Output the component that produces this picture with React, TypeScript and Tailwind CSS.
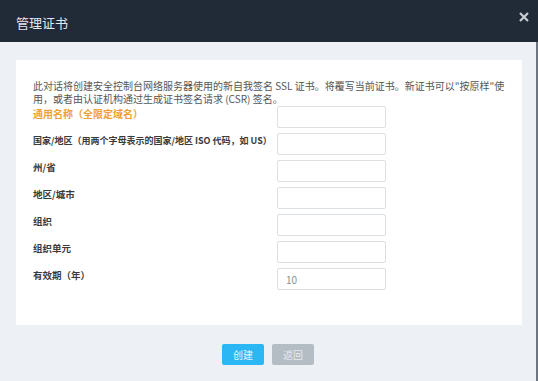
import React from 'react';

const fields = [
  { label: '通用名称（全限定域名）', size: 'text-[10px] text-[#f0a033]', value: '' },
  { label: '国家/地区（用两个字母表示的国家/地区 ISO 代码，如 US）', size: 'text-[9px] text-[#3a3a3a]', value: '' },
  { label: '州/省', size: 'text-[9.5px] text-[#3a3a3a]', value: '' },
  { label: '地区/城市', size: 'text-[9.5px] text-[#3a3a3a]', value: '' },
  { label: '组织', size: 'text-[9.5px] text-[#3a3a3a]', value: '' },
  { label: '组织单元', size: 'text-[9.5px] text-[#3a3a3a]', value: '' },
  { label: '有效期（年）', size: 'text-[9.5px] text-[#3a3a3a]', value: '10' },
];

const App: React.FC = () => {
  return (
    <div
      className="w-[538px] h-[381px] flex flex-col bg-[#edf0f4] overflow-hidden"
      style={{ fontFamily: '"Noto Sans CJK SC", "Noto Sans", sans-serif' }}
    >
      {/* Header */}
      <div className="h-[42px] shrink-0 bg-[#212b38] flex items-center justify-between pl-4 pr-[9px]">
        <span className="text-[13px] text-[#e4e7eb] pt-[4px]">管理证书</span>
        <svg className="w-[10px] h-[10px] mb-[8px] text-[#c9ced4]" viewBox="0 0 10 10" fill="none" stroke="currentColor">
          <path strokeWidth="2.2" d="M1 1l8 8M9 1l-8 8" />
        </svg>
      </div>

      {/* Body */}
      <div className="flex-1 flex flex-col border-r-2 border-[#6c7580]">
        <div className="ml-4 mt-[18px] w-[506px] h-[265px] bg-white px-[17px] pt-[19px]">
          <p className="text-[10px] leading-[13px] text-[#555]">
            此对话将创建安全控制台网络服务器使用的新自我签名 SSL 证书。将覆写当前证书。新证书可以"按原样"使用，或者由认证机构通过生成证书签名请求 (CSR) 签名。
          </p>
          <div className="flex flex-col gap-[5px] mt-[1px]">
            {fields.map((f) => (
              <div key={f.label} className="flex items-start">
                <span className={`w-[244px] shrink-0 whitespace-nowrap pt-[1.5px] leading-[11px] font-bold ${f.size}`}>
                  {f.label}
                </span>
                <input
                  readOnly
                  value={f.value}
                  className="w-[109px] h-[22px] border border-[#dcdfe3] rounded-[2px] bg-white px-2 text-[10px] text-[#8a8f96] outline-none"
                />
              </div>
            ))}
          </div>
        </div>

        {/* Buttons */}
        <div className="flex justify-center gap-2 mt-[19px]">
          <button className="w-[42px] h-[21px] rounded-[2px] bg-[#2bb6f4] text-[10px] text-[#e8f6fd]">创建</button>
          <button className="w-[42px] h-[21px] rounded-[2px] bg-[#b4bcc4] text-[10px] text-[#e6e9ec]">返回</button>
        </div>
      </div>
    </div>
  );
};

export default App;
